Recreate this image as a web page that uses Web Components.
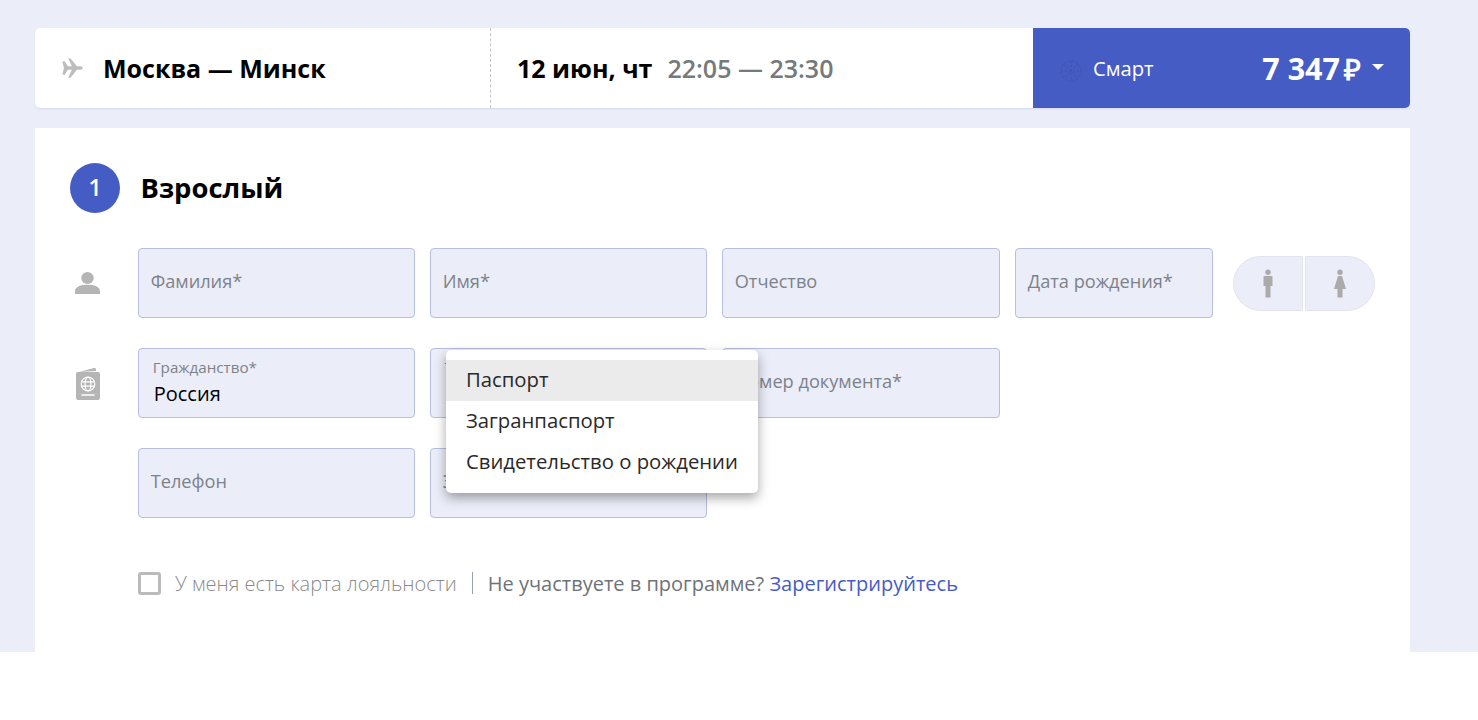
<!DOCTYPE html>
<html lang="ru">
<head>
<meta charset="utf-8">
<title>Бронирование</title>
<style>
  html, body { margin: 0; background: #fff; font-family: "Open Sans", sans-serif; }
</style>
</head>
<body>
<booking-page>
  <flight-bar></flight-bar>
  <passenger-card></passenger-card>
</booking-page>

<script>
class BookingPage extends HTMLElement {
  constructor () {
    super();
    this.attachShadow({ mode: 'open' }).innerHTML = `
      <style>
        :host {
          display: flex;
          flex-direction: column;
          gap: 20px;
          box-sizing: border-box;
          height: 652px;
          padding: 28px 68px 0 35px;
          background: #ebedf9;
          overflow: hidden;
        }
      </style>
      <slot></slot>`;
  }
}

class FlightBar extends HTMLElement {
  constructor () {
    super();
    this.attachShadow({ mode: 'open' }).innerHTML = `
      <style>
        :host {
          display: flex;
          height: 80px;
          flex: none;
          background: #fff;
          border-radius: 5px;
          box-shadow: 0 1px 2px rgba(60, 70, 120, .12);
          overflow: hidden;
          color: #000;
        }
        .route {
          box-sizing: border-box;
          width: 456px;
          display: flex;
          align-items: center;
          padding-left: 26px;
          gap: 20px;
          border-right: 1px dashed #c4c4c4;
          font-size: 25px;
          font-weight: 700;
        }
        .route svg { width: 22px; height: 22px; flex: none; }
        .time {
          flex: 1;
          display: flex;
          align-items: center;
          padding-left: 26px;
          gap: 15px;
          font-size: 25px;
          font-weight: 700;
        }
        .time span { color: #757a7a; font-weight: 600; }
        .fare {
          box-sizing: border-box;
          width: 377px;
          display: flex;
          align-items: center;
          background: #465cc5;
          color: #fff;
          padding: 0 26px 0 26px;
        }
        .fare svg.globe { width: 24px; height: 24px; flex: none; margin-right: 10px; margin-top: 5px; }
        .fare .name { font-size: 20.200px; flex: 1; }
        .fare .price { font-size: 30.500px; font-weight: 700; display: flex; align-items: baseline; gap: 4px; }
        .fare .rub { font-size: 29px; }
        .fare .caret {
          width: 0; height: 0; margin: 0 0 2px 11px;
          border-left: 6.500px solid transparent;
          border-right: 6.500px solid transparent;
          border-top: 6px solid #fff;
        }
      </style>
      <div class="route">
        <svg viewBox="0 0 24 24" fill="#bdbdbd"><path d="M1.500 5 4 4.500 7.500 10.200h4.300L8 1.500h2.400l7 8.700h4c1.300 0 2.200.8 2.200 1.800s-.9 1.800-2.200 1.800h-4l-7 8.700H8l3.800-8.700H7.500L4 19.500 1.500 19l1.700-7z"/></svg>
        <span>Москва — Минск</span>
      </div>
      <div class="time">12 июн, чт <span>22:05 — 23:30</span></div>
      <div class="fare">
        <svg class="globe" viewBox="0 0 24 24" fill="none" stroke="#4255b6" stroke-width="1.500" stroke-dasharray="2 2"><circle cx="12" cy="12" r="10"/><path d="M2 12h20M12 2v20M5 5l14 14M19 5 5 19"/></svg>
        <span class="name">Смарт</span>
        <span class="price">7 347<span class="rub">₽</span></span>
        <span class="caret"></span>
      </div>`;
  }
}

class TextField extends HTMLElement {
  constructor () {
    super();
    const value = this.getAttribute('value');
    const label = this.getAttribute('label');
    this.attachShadow({ mode: 'open' }).innerHTML = `
      <style>
        :host {
          display: block;
          box-sizing: border-box;
          height: 70px;
          background: #ebedf9;
          border: 1px solid #b7bede;
          border-radius: 4px;
          padding: 0 12px 0 11.700px;
          overflow: hidden;
          white-space: nowrap;
        }
        .ph { display: block; line-height: 64px; font-size: 18.200px; color: #7d8289; }
        .small { display: block; margin: 8px 0 0 2px; font-size: 15.200px; line-height: 20px; color: #7d8289; }
        .val { display: block; margin: 4px 0 0 3px; font-size: 20px; line-height: 26px; color: #000; }
      </style>
      ${value !== null
        ? `<span class="small">${label}</span><span class="val">${value}</span>`
        : `<span class="ph">${label}</span>`}`;
  }
}

class GenderSwitch extends HTMLElement {
  constructor () {
    super();
    this.attachShadow({ mode: 'open' }).innerHTML = `
      <style>
        :host { display: flex; gap: 2px; height: 55px; margin: 8px 0 0 5px; }
        div {
          width: 70px;
          display: flex;
          align-items: center;
          justify-content: center;
          box-sizing: border-box;
          background: #ebedf9;
          border: 1px solid #e1e3ee;
        }
        div:first-of-type { border-radius: 28px 0 0 28px; }
        div:last-of-type { border-radius: 0 28px 28px 0; }
        svg { width: 16px; height: 30px; fill: #ababab; }
      </style>
      <div><svg viewBox="0 0 16 30"><circle cx="8" cy="3.300" r="2.700"/><path d="M3.500 7.500Q3.500 7 4.500 7h7q1 0 1 .5v9.500h-2V28.500H5.500V17h-2z"/></svg></div>
      <div><svg viewBox="0 0 16 30"><circle cx="8" cy="3.300" r="2.700"/><path d="M6 7h4l4 13h-3.500V28.500H5.500V20H2z"/></svg></div>`;
  }
}

class DocMenu extends HTMLElement {
  constructor () {
    super();
    this.attachShadow({ mode: 'open' }).innerHTML = `
      <style>
        :host {
          position: absolute;
          left: 411px;
          top: 222px;
          width: 312px;
          box-sizing: border-box;
          padding: 10px 0;
          background: #fff;
          border-radius: 5px;
          box-shadow: 0 5px 12px rgba(0, 0, 0, .35);
          color: #292929;
          font-size: 20.300px;
        }
        div { height: 41px; line-height: 39px; padding-left: 20px; white-space: nowrap; }
        .on { background: #ebebeb; }
      </style>
      <div class="on">Паспорт</div>
      <div>Загранпаспорт</div>
      <div>Свидетельство о рождении</div>`;
  }
}

class PassengerCard extends HTMLElement {
  constructor () {
    super();
    this.attachShadow({ mode: 'open' }).innerHTML = `
      <style>
        :host {
          display: block;
          position: relative;
          flex: 1;
          background: #fff;
          padding: 35px 35px 0;
        }
        header { display: flex; align-items: center; gap: 20.500px; height: 50px; }
        .num {
          width: 50px; height: 50px; border-radius: 50%;
          background: #465cc5; color: #fff;
          display: flex; align-items: center; justify-content: center;
          font-size: 23px; font-weight: 600; line-height: 48px; padding-bottom: 2px; box-sizing: border-box;
        }
        h2 { margin: 0 0 2px; font-size: 27.400px; font-weight: 700; color: #000; }
        .rows { display: flex; flex-direction: column; gap: 30px; margin-top: 35px; }
        .row { display: flex; align-items: flex-start; }
        .icon { width: 68px; flex: none; padding: 0 0 0 5px; box-sizing: border-box; }
        .icon svg { display: block; width: 25px; fill: #b5b5b5; }
        .fields { display: flex; gap: 15px; }
        .w277 { width: 277px; }
        .w278 { width: 278px; }
        .w198 { width: 198px; }
        .loyal {
          display: flex; align-items: center;
          margin: 50px 0 0 68px;
          height: 30px;
          font-size: 20px;
        }
        .box {
          width: 23px; height: 23px; box-sizing: border-box;
          border: 3px solid #bbb; border-radius: 3px; margin-right: 14px;
        }
        .lab { color: #8a8a8a; font-weight: 300; }
        .sep { width: 1px; height: 22px; background: #9aa0ad; margin: 0 15px; }
        .q { color: #6f7378; }
        a { color: #465cc5; text-decoration: none; }
      </style>
      <header><div class="num">1</div><h2>Взрослый</h2></header>
      <div class="rows">
        <div class="row">
          <div class="icon" style="padding-top:23px"><svg height="24" viewBox="0 0 26 26" preserveAspectRatio="none"><circle cx="13" cy="7.500" r="6.500"/><path d="M0 25v-3c0-5 6-7 13-7s13 2 13 7v3z"/></svg></div>
          <div class="fields">
            <text-field class="w277" label="Фамилия*"></text-field>
            <text-field class="w277" label="Имя*"></text-field>
            <text-field class="w278" label="Отчество"></text-field>
            <text-field class="w198" label="Дата рождения*"></text-field>
            <gender-switch></gender-switch>
          </div>
        </div>
        <div class="row">
          <div class="icon" style="padding-top:19px;padding-left:6px"><svg style="width:24px" height="33" viewBox="0 0 24 33"><path d="M3 5 18 1q2-.3 2 1.300V4z"/><rect y="5" width="24" height="28" rx="2"/><g fill="none" stroke="#fff" stroke-width="1.200"><circle cx="12" cy="17" r="6.800"/><ellipse cx="12" cy="17" rx="3" ry="6.800"/><path d="M5.500 14.800h13M5.500 19.200h13"/></g><path fill="none" stroke="#fff" stroke-width="1.500" d="M5.500 28h13"/></svg></div>
          <div class="fields">
            <text-field class="w277" label="Гражданство*" value="Россия"></text-field>
            <text-field class="w277" label="Тип документа*" value=""></text-field>
            <text-field class="w278" label="Номер документа*"></text-field>
          </div>
        </div>
        <div class="row">
          <div class="icon"></div>
          <div class="fields">
            <text-field class="w277" label="Телефон"></text-field>
            <text-field class="w277" label="Электронная почта"></text-field>
          </div>
        </div>
      </div>
      <div class="loyal">
        <span class="box"></span>
        <span class="lab">У меня есть карта лояльности</span>
        <span class="sep"></span>
        <span class="q">Не участвуете в программе?&nbsp;</span><a href="#">Зарегистрируйтесь</a>
      </div>
      <doc-menu></doc-menu>`;
  }
}

customElements.define('booking-page', BookingPage);
customElements.define('flight-bar', FlightBar);
customElements.define('text-field', TextField);
customElements.define('gender-switch', GenderSwitch);
customElements.define('doc-menu', DocMenu);
customElements.define('passenger-card', PassengerCard);
</script>
</body>
</html>
